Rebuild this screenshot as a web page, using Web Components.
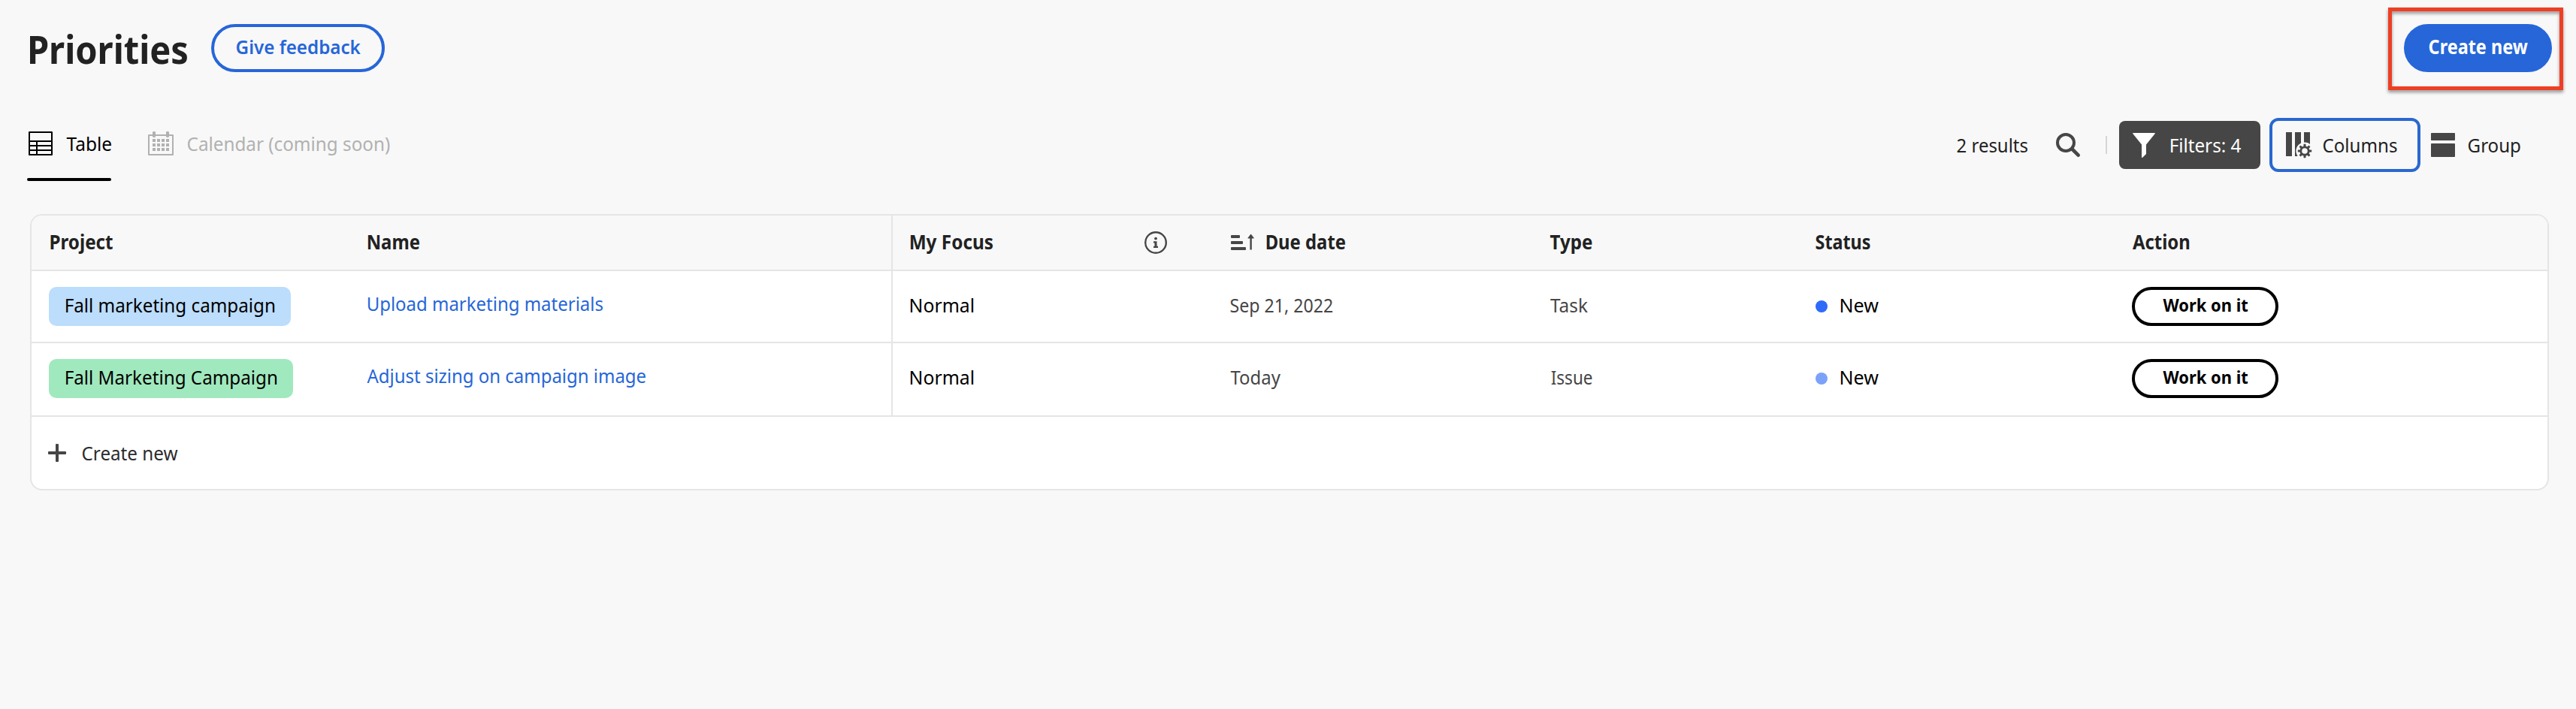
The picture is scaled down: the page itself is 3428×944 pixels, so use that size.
<!DOCTYPE html>
<html lang="en">
<head>
<meta charset="utf-8">
<title>Priorities</title>
<style>
html,body{margin:0;background:#f8f8f8}
body{font-family:"Noto Sans","Open Sans",sans-serif;font-size:26px;color:#222}
</style>
</head>
<body>
<priorities-page></priorities-page>
<script>
const define = (name, html, setup) => {
  const t = document.createElement('template');
  t.innerHTML = html;
  customElements.define(name, class extends HTMLElement {
    connectedCallback() {
      if (this.shadowRoot) return;
      this.attachShadow({ mode: 'open' }).append(t.content.cloneNode(true));
      if (setup) setup(this, this.shadowRoot);
    }
  });
};

/* Text condensed to a given ink width; x and y are small optical shifts. */
const ctx = document.createElement('canvas').getContext('2d');
customElements.define('fit-text', class extends HTMLElement {
  connectedCallback() {
    if (this.shadowRoot) return;
    const root = this.attachShadow({ mode: 'open' });
    const num = (n, d) => parseFloat(this.getAttribute(n) ?? d);
    const w = num('w', 100), size = num('size', 26), weight = num('weight', 400);
    const text = this.textContent.trim();
    ctx.font = `${weight} ${size}px "Noto Sans"`;
    const m = ctx.measureText(text);
    const k = w / (m.actualBoundingBoxRight + m.actualBoundingBoxLeft);
    const x = num('x', 0) + .5 + m.actualBoundingBoxLeft * k;
    root.innerHTML = `<style>
      :host{display:block;flex:none;width:${w}px;height:${size * 1.4}px;line-height:${size * 1.4}px;
        font-size:${size}px;font-weight:${weight};white-space:nowrap}
      span{display:inline-block;transform-origin:0 50%;transform:translate(${x}px,${num('y', 0)}px) scaleX(${k})}
    </style><span><slot></slot></span>`;
  }
});

const gear = () => {
  let s = '';
  for (let i = 0; i < 8; i++) s += `<rect x="23.500" y="15.800" width="3" height="4.500" rx=".6" transform="rotate(${i * 45} 25 25)"/>`;
  return s;
};
const icons = {
  table: [32, 32, '<path d="M1 1h30v30H1z M1 13h30 M1 19h30 M1 25h30 M11 13v18" fill="none" stroke="currentColor" stroke-width="2" stroke-linejoin="round"/>'],
  calendar: [34, 32, '<path d="M1 5h32v26H1z" fill="none" stroke="currentColor" stroke-width="2" stroke-linejoin="round"/><rect x="6" width="4" height="8" rx="1.4"/><rect x="24" width="4" height="8" rx="1.4"/><path d="M6 10h4v4H6zm6 0h4v4h-4zm6 0h4v4h-4zm6 0h4v4h-4zM6 16h4v4H6zm6 0h4v4h-4zm6 0h4v4h-4zm6 0h4v4h-4zM6 22h4v4H6zm6 0h4v4h-4zm6 0h4v4h-4zm6 0h4v4h-4z"/>'],
  search: [32, 32, '<circle cx="13" cy="13" r="11" fill="none" stroke="currentColor" stroke-width="4"/><path d="M21.5 21.5L29.7 29.7" stroke="currentColor" stroke-width="4.6" stroke-linecap="round"/>'],
  filter: [30, 33, '<path d="M.8 0h28.4q1.3 0 .5 1.1L18 15.500V28l-4.800 4.700q-1.200.6-1.200-.7V15.500L.3 1.100Q-.5 0 .8 0z"/>'],
  columns: [34, 34, `<path d="M0 0h8v32H0zM12 0h8v32h-8zM24 0h8v18h-8z"/><circle cx="25" cy="25" r="11.600" fill="#f8f8f8"/>${gear()}<circle cx="25" cy="25" r="5.200" fill="none" stroke="currentColor" stroke-width="2.800"/>`],
  group: [32, 32, '<rect width="32" height="10" rx=".8"/><rect y="14" width="32" height="18" rx=".8"/>'],
  info: [30, 30, '<circle cx="15" cy="15" r="13.800" fill="none" stroke="currentColor" stroke-width="2.400"/><circle cx="15" cy="9.600" r="1.900"/><path d="M12 13.200h4.500v6.600H18V22h-6v-2.200h1.500v-4.400H12z"/>'],
  sort: [32, 22, '<rect y="1" width="12" height="4" rx="1"/><rect y="9" width="16" height="4" rx="1"/><rect y="17" width="20" height="4" rx="1"/><path d="M26.200 0q.4-.4.8 0l3.700 4.700q.3.800-.5.800h-2.400V20.500h-2.400V5.500H23q-.8 0-.5-.8z"/>'],
  plus: [24, 24, '<rect x="10" width="4" height="24" rx="1"/><rect y="10" width="24" height="4" rx="1"/>']
};
define('ui-icon', '<style>:host{display:block;flex:none}svg{display:block;overflow:visible}</style><svg fill="currentColor" aria-hidden="true"></svg>', (el, root) => {
  const [w, h, body] = icons[el.getAttribute('name')];
  const svg = root.querySelector('svg');
  svg.setAttribute('width', w); svg.setAttribute('height', h);
  svg.setAttribute('viewBox', `0 0 ${w} ${h}`);
  svg.innerHTML = body;
});

define('pill-button', `<style>
  :host{display:flex;flex:none;align-items:center;justify-content:center;box-sizing:border-box;width:231px;height:64px;
    border:4px solid #2666d8;border-radius:32px;color:#2666d8}
  :host([kind=primary]){width:197px;background:#2666d8;color:#fff}
  :host([kind=row]){width:195px;height:52px;border-color:#000;border-radius:26px;color:#000}
</style><slot></slot>`);

define('view-tab', `<style>
  :host{display:flex;align-items:center;box-sizing:border-box;height:100px;padding-top:4px;border-bottom:4px solid transparent;gap:18px;color:#b1b1b1;position:relative}
  :host([active]){color:#000}
  :host([active])::after{content:"";position:absolute;left:0;right:0;bottom:-4px;height:4px;border-radius:2px;background:#000}
</style><slot></slot>`);

define('tool-button', `<style>
  :host{display:flex;flex:none;align-items:center;box-sizing:border-box;height:64px;color:#464646}
  :host([kind=filled]){width:188px;padding-left:18px;gap:20px;border-radius:8px;background:#464646;color:#fff}
  :host([kind=outlined]){width:201px;height:72px;padding-left:18px;gap:15px;border:4px solid #2a68cf;border-radius:12px}
  :host([kind=plain]){gap:16.500px}
</style><slot></slot>`);

define('project-chip', `<style>
  :host{display:flex;align-items:center;box-sizing:border-box;height:52px;padding:0 22px;border-radius:10px;background:#bcddfc;color:#000}
  :host([tone=green]){background:#a0e9be}
</style><slot></slot>`);

define('status-dot', `<style>
  :host{display:flex;align-items:center;gap:17px;color:#000}
  i{width:16px;height:16px;border-radius:50%;background:#2f6af8}
  :host([tone=light]) i{background:#7ba2f9}
</style><i></i><slot></slot>`);

define('table-row', `<style>
  :host{display:grid;grid-template-columns:424px 697px 451px 425px 354px 421px 1fr;box-sizing:border-box;height:96px;padding-left:23px;
    border-bottom:2px solid #e5e5e5;background:#fff;color:#464646}
  :host([header]){height:74px;background:#f8f8f8;color:#222}
  :host([tall]){height:98px}
  ::slotted(*){align-self:center;justify-self:start}
</style><slot></slot>`);

define('focus-cell', `<style>
  :host{display:flex;align-self:stretch !important;justify-self:stretch !important;align-items:center;justify-content:space-between;
    border-left:2px solid #e5e5e5;padding:0 84px 0 23px;color:#000}
  :host([header]){color:#222}
  ::slotted(ui-icon){color:#464646}
</style><slot></slot>`);

define('due-head', `<style>:host{display:flex;align-items:center;gap:15px;padding-left:1px}::slotted(ui-icon){color:#464646}</style><slot></slot>`);
define('task-link', `<style>:host{display:block;color:#2666d8}</style><slot></slot>`);

define('data-card', `<style>
  :host{display:block;box-sizing:border-box;width:3352px;height:368px;border:2px solid #e5e5e5;border-radius:16px;background:#fff;overflow:hidden}
</style><slot></slot>`);

define('create-row', `<style>
  :host{display:flex;align-items:center;gap:20.500px;height:96px;padding-left:22px;color:#2c2c2c}
  ::slotted(ui-icon){color:#464646}
</style><slot></slot>`);

define('call-out', `<style>
  :host{display:block;position:relative}
  :host::after{content:"";position:absolute;left:-21px;top:-22px;width:223px;height:100px;border:5px solid #ee3f24;
    filter:drop-shadow(0 3px 2px rgba(0,0,0,.4))}
</style><slot></slot>`);

define('priorities-page', `<style>
  :host{display:block;box-sizing:border-box;width:3428px;height:944px;overflow:hidden;background:#f8f8f8}
  header{display:flex;align-items:center;height:64px;padding:32px 32px 0 38.500px}
  header pill-button{margin-left:33px}
  header call-out{margin-left:auto}
  header call-out pill-button{margin:0}
  nav{display:flex;align-items:flex-start;box-sizing:border-box;height:144px;margin-top:45px;padding:0 75px 0 36px}
  .tabs{display:flex;gap:49px}
  .tools{display:flex;align-items:center;margin:16px 0 0 auto;height:72px}
  .tools>ui-icon{margin-left:38px;color:#464646}
  hr{width:2px;height:24px;margin:0 16px 0 34px;border:0;background:#d5d5d5}
  main{padding-left:40px}
</style>
<header>
  <fit-text w="209.500" size="52" weight="700" y="1">Priorities</fit-text>
  <pill-button><fit-text w="166" weight="600" y="-2">Give feedback</fit-text></pill-button>
  <call-out><pill-button kind="primary"><fit-text w="131" weight="700" y="-2">Create new</fit-text></pill-button></call-out>
</header>
<nav>
  <div class="tabs">
    <view-tab active><ui-icon name="table" style="margin-left:2px"></ui-icon><fit-text w="60">Table</fit-text></view-tab>
    <view-tab><ui-icon name="calendar"></ui-icon><fit-text w="269">Calendar (coming soon)</fit-text></view-tab>
  </div>
  <div class="tools">
    <fit-text w="94">2 results</fit-text>
    <ui-icon name="search"></ui-icon>
    <hr>
    <tool-button kind="filled"><ui-icon name="filter"></ui-icon><fit-text w="94">Filters: 4</fit-text></tool-button>
    <tool-button kind="outlined" style="margin-left:12px"><ui-icon name="columns"></ui-icon><fit-text w="98.500" style="color:#222">Columns</fit-text></tool-button>
    <tool-button kind="plain" style="margin-left:14px"><ui-icon name="group"></ui-icon><fit-text w="69.500" style="color:#222">Group</fit-text></tool-button>
  </div>
</nav>
<main>
  <data-card>
    <table-row header>
      <fit-text w="83" weight="700" x="1.800" y="-1">Project</fit-text>
      <fit-text w="69" weight="700" y="-1">Name</fit-text>
      <focus-cell header><fit-text w="109.500" weight="700" y="-1">My Focus</fit-text><ui-icon name="info"></ui-icon></focus-cell>
      <due-head><ui-icon name="sort"></ui-icon><fit-text w="105" weight="700" y="-1">Due date</fit-text></due-head>
      <fit-text w="56.500" weight="700" y="-1">Type</fit-text>
      <fit-text w="72" weight="700" y="-1">Status</fit-text>
      <fit-text w="76" weight="700" x=".5" y="-1">Action</fit-text>
    </table-row>
    <table-row>
      <project-chip><fit-text w="277.500" y="-2">Fall marketing campaign</fit-text></project-chip>
      <task-link><fit-text w="313" y="-4">Upload marketing materials</fit-text></task-link>
      <focus-cell><fit-text w="84" y="-2">Normal</fit-text></focus-cell>
      <fit-text w="136" y="-2">Sep 21, 2022</fit-text>
      <fit-text w="50" x=".5" y="-2">Task</fit-text>
      <status-dot><fit-text w="51" y="-2">New</fit-text></status-dot>
      <pill-button kind="row"><fit-text w="113" size="24" weight="700" y="-2">Work on it</fit-text></pill-button>
    </table-row>
    <table-row tall style="padding-bottom:2px">
      <project-chip tone="green"><fit-text w="280.500" y="-2">Fall Marketing Campaign</fit-text></project-chip>
      <task-link><fit-text w="371" x="-1" y="-4">Adjust sizing on campaign image</fit-text></task-link>
      <focus-cell style="margin-bottom:-2px;padding-bottom:2px"><fit-text w="84" y="-2">Normal</fit-text></focus-cell>
      <fit-text w="67" y="-2">Today</fit-text>
      <fit-text w="54.500" x="2" y="-2">Issue</fit-text>
      <status-dot tone="light"><fit-text w="51" y="-2">New</fit-text></status-dot>
      <pill-button kind="row"><fit-text w="113" size="24" weight="700" y="-2">Work on it</fit-text></pill-button>
    </table-row>
    <create-row><ui-icon name="plus"></ui-icon><fit-text w="127.500">Create new</fit-text></create-row>
  </data-card>
</main>`);
</script>
</body>
</html>
